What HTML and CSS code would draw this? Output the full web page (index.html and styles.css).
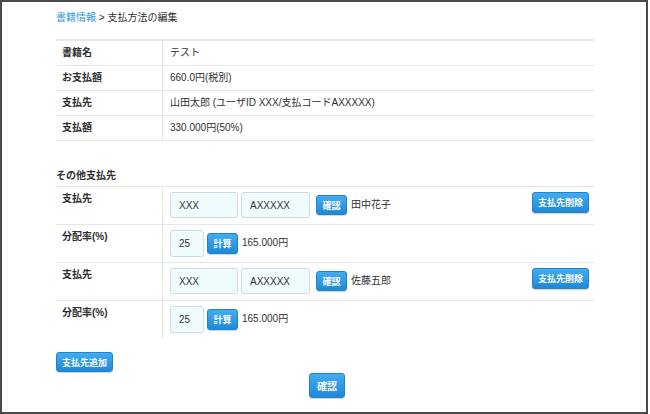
FILE: index.html
```html
<!DOCTYPE html>
<html lang="ja">
<head>
<meta charset="utf-8">
<title>支払方法の編集</title>
<link rel="stylesheet" href="styles.css">
</head>
<body>
<div class="frame">
  <div class="container">
    <div class="crumb"><a class="crumb-link" href="#">書籍情報</a> &gt; 支払方法の編集</div>

    <table class="info">
      <tr><th>書籍名</th><td>テスト</td></tr>
      <tr><th>お支払額</th><td>660.0円(税別)</td></tr>
      <tr><th>支払先</th><td>山田太郎 (ユーザID XXX/支払コードAXXXXX)</td></tr>
      <tr><th>支払額</th><td>330.000円(50%)</td></tr>
    </table>

    <h2 class="section">その他支払先</h2>

    <table class="others">
      <tr>
        <th>支払先</th>
        <td>
          <div class="cell-row">
            <input class="field id" type="text" value="XXX">
            <input class="field code" type="text" value="AXXXXX">
            <button class="btn small confirm">確認</button>
            <span class="name">田中花子</span>
            <button class="btn small delete">支払先削除</button>
          </div>
        </td>
      </tr>
      <tr>
        <th>分配率(%)</th>
        <td>
          <div class="cell-row">
            <input class="field rate" type="text" value="25">
            <button class="btn small calc">計算</button>
            <span class="amount">165.000円</span>
          </div>
        </td>
      </tr>
      <tr>
        <th>支払先</th>
        <td>
          <div class="cell-row">
            <input class="field id" type="text" value="XXX">
            <input class="field code" type="text" value="AXXXXX">
            <button class="btn small confirm">確認</button>
            <span class="name">佐藤五郎</span>
            <button class="btn small delete">支払先削除</button>
          </div>
        </td>
      </tr>
      <tr>
        <th>分配率(%)</th>
        <td>
          <div class="cell-row">
            <input class="field rate" type="text" value="25">
            <button class="btn small calc">計算</button>
            <span class="amount">165.000円</span>
          </div>
        </td>
      </tr>
    </table>

    <button class="btn small add">支払先追加</button>
    <div class="submit-row"><button class="btn big">確認</button></div>
  </div>
</div>
</body>
</html>
```

FILE: styles.css
```css
html, body {
  margin: 0;
  padding: 0;
  background: #ffffff;
}

body {
  font-family: "Liberation Sans", "Noto Sans CJK JP", sans-serif;
  font-size: 10px;
  color: #2f2f2f;
}

.frame {
  box-sizing: border-box;
  width: 648px;
  height: 414px;
  border: 2px solid #4a4a4a;
  overflow: hidden;
}

.container {
  margin-left: 54px;
  width: 538px;
}

.crumb {
  padding-top: 9px;
  line-height: 14px;
  height: 14px;
  margin-bottom: 14px;
}

.crumb-link {
  color: #2e9ad9;
  text-decoration: none;
}

table {
  border-collapse: collapse;
  width: 538px;
}

th {
  text-align: left;
  font-weight: bold;
  width: 100px;
  padding: 0 0 0 6px;
  color: #2f2f2f;
}

td {
  padding: 0 0 0 7px;
  border-left: 1px solid #e6e6e6;
}

.info {
  border-top: 2px solid #e9e9e9;
}

.info th, .info td {
  height: 24px;
  line-height: 14px;
  border-bottom: 1px solid #e6e6e6;
}

.section {
  font-size: 10px;
  font-weight: bold;
  margin: 28px 0 3px 0;
  line-height: 14px;
}

.others th, .others td {
  border-top: 1px solid #e6e6e6;
  padding-top: 5px;
  padding-bottom: 6px;
  vertical-align: top;
  line-height: 14px;
}

.others th {
  padding-left: 6px;
}

.others td {
  padding-left: 6px;
  padding-right: 5px;
}

.cell-row {
  display: flex;
  align-items: center;
  height: 26px;
}

.field {
  box-sizing: border-box;
  height: 26px;
  border: 1px solid #cfdbe0;
  border-radius: 3px;
  background: #f0fbfe;
  font-family: "Liberation Sans", "Noto Sans CJK JP", sans-serif;
  font-size: 10px;
  color: #333333;
  padding: 0 0 0 8px;
  margin: 0;
  outline: none;
}

.field.id {
  width: 68px;
  margin-left: 1px;
}

.field.code {
  width: 69px;
  margin-left: 3px;
}

.field.rate {
  width: 34px;
  height: 27px;
  margin-left: 1px;
}

.btn {
  box-sizing: border-box;
  font-family: "Liberation Sans", "Noto Sans CJK JP", sans-serif;
  font-weight: bold;
  color: #ffffff;
  background: linear-gradient(#43acf0, #1f89d6);
  border: 1px solid #1f84cd;
  border-radius: 3px;
  box-shadow: 0 1px 1px rgba(0, 0, 0, 0.18);
  padding: 0;
  margin: 0;
  cursor: pointer;
}

.btn.small {
  font-size: 9px;
  height: 20px;
}

.confirm {
  width: 31px;
  margin-left: 6px;
}

.name {
  margin-left: 4px;
}

.delete {
  width: 57px;
  height: 21px !important;
  margin-left: auto;
  align-self: flex-start;
}

.calc {
  width: 31px;
  height: 21px !important;
  margin-left: 3px;
}

.amount {
  margin-left: 4px;
}

.add {
  width: 57px;
  margin-top: 14px;
  display: block;
}

.submit-row {
  display: flex;
  justify-content: center;
  margin-left: -54px;
  width: 648px;
  margin-top: 1px;
}

.btn.big {
  width: 36px;
  height: 25px;
  font-size: 10px;
  margin-left: 2px;
}
```
